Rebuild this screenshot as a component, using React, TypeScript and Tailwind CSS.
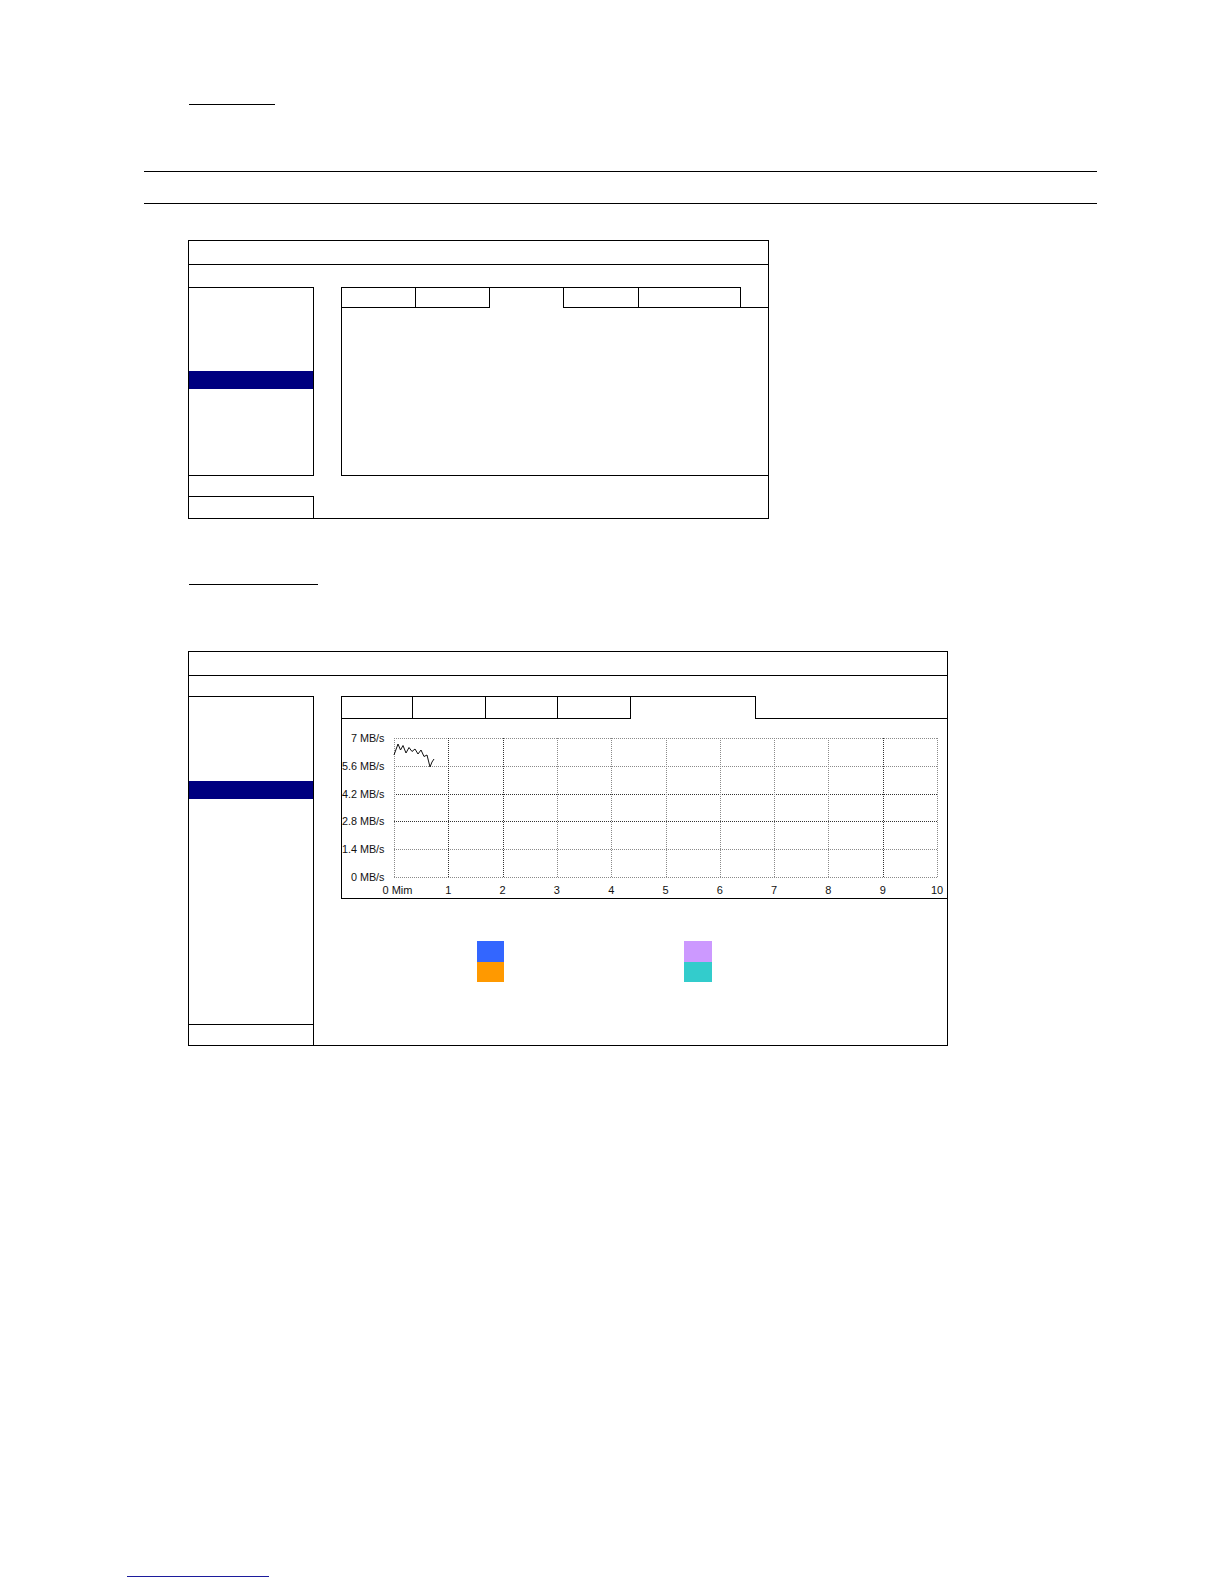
const cols = Array.from({ length: 11 }, (_, i) => 52 + i * 54.3);
const rows = Array.from({ length: 6 }, (_, j) => 19 + j * 27.8);
const yLabels = ["7 MB/s", "5.6 MB/s", "4.2 MB/s", "2.8 MB/s", "1.4 MB/s", "0 MB/s"];
const xLabels = ["0 Mim", "1", "2", "3", "4", "5", "6", "7", "8", "9", "10"];
const trace =
  "52,36 56,25 58.5,31 61,26.5 64,34 67,28.5 70,32.5 73,30 76,35 79,31 82,37.5 85,36 88,48 90,43 92,40";

function Chart() {
  const px = (v: number) => Math.round(v) + 0.5;
  return (
    <svg width={603} height={179} className="block overflow-visible" viewBox="0 0 603 179" overflow="visible">
      {rows.map((y, j) => (
        <line
          key={"r" + j}
          x1={52}
          x2={595.5}
          y1={px(y)}
          y2={px(y)}
          stroke={j === 2 || j === 3 ? "#333" : "#8a8a8a"}
          strokeWidth={1}
          strokeDasharray="1 1"
        />
      ))}
      {cols.map((x, i) => (
        <line
          key={"c" + i}
          x1={px(x)}
          x2={px(x)}
          y1={19}
          y2={158.5}
          stroke={i === 1 || i === 2 || i === 9 ? "#333" : "#8a8a8a"}
          strokeWidth={1}
          strokeDasharray="1 1"
        />
      ))}
      <polyline points={trace} fill="none" stroke="#111" strokeWidth={1} />
      {rows.map((y, j) => (
        <text
          key={"yl" + j}
          x={42.5}
          y={y + 4}
          textAnchor="end"
          fontSize={10.8}
          fontFamily="'Liberation Sans', Arial, sans-serif"
          fill="#111"
        >
          {yLabels[j]}
        </text>
      ))}
      {cols.map((x, i) => (
        <text
          key={"xl" + i}
          x={i === 0 ? 55.5 : x}
          y={174.5}
          textAnchor="middle"
          fontSize={11}
          fontFamily="'Liberation Sans', Arial, sans-serif"
          fill="#111"
        >
          {xLabels[i]}
        </text>
      ))}
    </svg>
  );
}

function Sidebar({ h, top }: { h: string; top: string }) {
  return (
    <div className={`${h} border-t border-r border-b border-black flex flex-col`}>
      <div className={top} />
      <div className="h-[18px] bg-[#000080]" />
    </div>
  );
}

export default function App() {
  return (
    <div className="w-[1224px] h-[1584px] bg-white flex flex-col overflow-hidden font-['Liberation_Sans',Arial,sans-serif]">
      <div className="mt-[104px] ml-[189px] w-[86px] h-px bg-black" />
      <div className="mt-[66px] ml-[144px] w-[953px] h-px bg-black" />
      <div className="mt-[31px] ml-[144px] w-[953px] h-px bg-black" />

      {/* Panel 1 */}
      <div className="mt-[36px] ml-[188px] w-[581px] border border-black flex flex-col">
        <div className="h-[24px] border-b border-black" />
        <div className="mt-[22px] flex">
          <div className="w-[125px] flex flex-col">
            <Sidebar h="h-[189px]" top="h-[83px]" />
            <div className="mt-[20px] h-[22px] border-t border-r border-black" />
          </div>
          <div className="ml-[27px] flex-1 self-start border-l border-b border-black flex flex-col">
            <div className="flex h-[21px]">
              <div className="w-[74px] border-t border-r border-b border-black" />
              <div className="w-[74px] border-t border-r border-b border-black" />
              <div className="w-[74px] border-t border-r border-black" />
              <div className="w-[75px] border-t border-r border-b border-black" />
              <div className="w-[102px] border-t border-r border-b border-black" />
              <div className="flex-1 border-b border-black" />
            </div>
            <div className="h-[167px]" />
          </div>
        </div>
      </div>

      <div className="mt-[65px] ml-[189px] w-[129px] h-px bg-black" />

      {/* Panel 2 */}
      <div className="mt-[66px] ml-[188px] w-[760px] border border-black flex flex-col">
        <div className="h-[24px] border-b border-black" />
        <div className="mt-[20px] flex">
          <div className="w-[125px] flex flex-col">
            <Sidebar h="h-[329px]" top="h-[84px]" />
            <div className="h-[20px] border-r border-black" />
          </div>
          <div className="ml-[27px] flex-1 flex flex-col">
            <div className="border-l border-b border-black flex flex-col">
              <div className="flex h-[23px]">
                <div className="w-[71px] border-t border-r border-b border-black" />
                <div className="w-[73px] border-t border-r border-b border-black" />
                <div className="w-[72px] border-t border-r border-b border-black" />
                <div className="w-[73px] border-t border-r border-b border-black" />
                <div className="w-[125px] border-t border-r border-black" />
                <div className="flex-1 border-b border-black" />
              </div>
              <Chart />
            </div>
            <div className="mt-[42px] ml-[136px] flex">
              <div className="flex flex-col w-[27px]">
                <div className="h-[21px] bg-[#3366ff]" />
                <div className="h-[20px] bg-[#ff9900]" />
              </div>
              <div className="ml-[180px] flex flex-col w-[28px]">
                <div className="h-[21px] bg-[#cc99ff]" />
                <div className="h-[20px] bg-[#33cccc]" />
              </div>
            </div>
          </div>
        </div>
      </div>

      <div className="mt-[530px] ml-[127px] w-[142px] h-px bg-[#1c1c9c]" />
    </div>
  );
}
